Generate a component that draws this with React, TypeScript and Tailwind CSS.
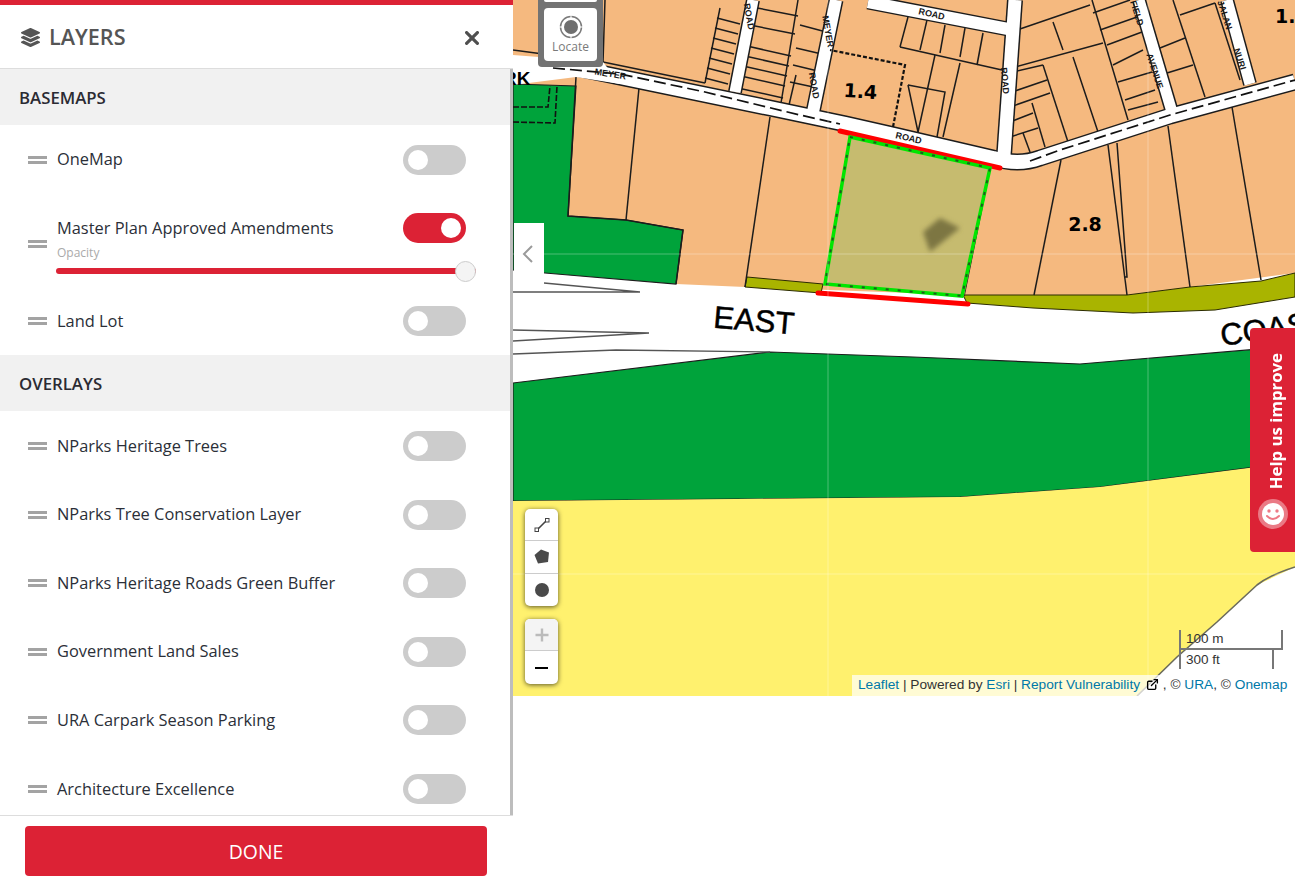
import React from 'react';
import { FaLayerGroup } from 'react-icons/fa';
import { ExternalLink } from 'lucide-react';

const Toggle = ({ on = false }: { on?: boolean }) => (
  <div className={`h-[30px] w-[63px] rounded-full flex items-center px-[5px] shrink-0 ${on ? 'bg-[#dc2235] justify-end' : 'bg-[#cccccc] justify-start'}`}>
    <div className="w-5 h-5 rounded-full bg-white" />
  </div>
);

const Grip = () => (
  <div className="w-[19px] flex flex-col gap-[2px] shrink-0">
    <div className="h-[3px] bg-[#a3a3a3]" />
    <div className="h-[3px] bg-[#a3a3a3]" />
  </div>
);

const Row = ({ label }: { label: string }) => (
  <div className="h-[68.6px] pl-[28px] pr-[44px] pt-[1px] flex items-center">
    <Grip />
    <span className="ml-[10px] flex-1 text-[16.4px] text-[#2b2f38]">{label}</span>
    <Toggle />
  </div>
);

const SectionTitle = ({ children }: { children: string }) => (
  <div className="h-[56px] bg-[#f1f1f1] pl-[19px] pt-[1px] flex items-center text-[16.8px] font-semibold text-[#2b2b33]">{children}</div>
);

const overlays = [
  'NParks Heritage Trees',
  'NParks Tree Conservation Layer',
  'NParks Heritage Roads Green Buffer',
  'Government Land Sales',
  'URA Carpark Season Parking',
  'Architecture Excellence',
];

// parcel boundaries, in page coordinates
const parcelLines = [
  'M720 8 L705 83', 'M717 18 L740 24', 'M715 28 L738 34', 'M713 38 L736 44', 'M711 48 L734 54', 'M709 58 L732 64', 'M707 68 L730 74', 'M705 78 L728 84',
  'M798 0 L781 103', 'M752 7 L798 16', 'M750 25 L795 34', 'M747 46 L791 56', 'M745 56 L789 66', 'M743 66 L787 76', 'M741 76 L785 86', 'M738 88 L783 98',
  'M800 25 L830 33', 'M796 48 L826 55', 'M793 65 L822 72', 'M790 82 L818 88', 'M796 75 L789 105',
  'M513 50 L603 62', 'M605 0 L603 62', 'M603 62 L705 83',
  'M908 17 L900 47', 'M927 20 L920 50', 'M945 25 L940 53', 'M965 28 L960 57', 'M983 33 L977 65', 'M900 47 L1002 70',
  'M935 55 L918 132', 'M960 63 L943 137', 'M908 85 L945 92 L937 137', 'M908 85 L918 132',
  'M1017 30 L1090 5', 'M1015 67 L1103 43', 'M1053 22 L1063 50', 'M1013 72 L1043 65', 'M1012 92 L1047 80', 'M1010 107 L1050 93', 'M1010 122 L1033 113', 'M1010 137 L1038 128',
  'M1023 133 L1030 152', 'M1032 103 L1045 147', 'M1043 65 L1068 142', 'M1073 57 L1098 132', 'M1092 0 L1128 120', 'M1093 13 L1130 0', 'M1100 30 L1137 17', 'M1107 45 L1142 32',
  'M1113 65 L1143 50', 'M1118 82 L1152 72', 'M1125 100 L1155 90', 'M1128 110 L1158 102',
  'M1160 48 L1185 38', 'M1167 73 L1193 65', 'M1173 0 L1205 97', 'M1180 15 L1215 3', 'M1215 3 L1240 80',
  'M639 88 L626 220', 'M770 117 L745 287', 'M1061 160 L1034 295', 'M1108 145 L1127 295', 'M1117 143 L1127 277 L1125 277',
  'M1168 126 L1190 287', 'M1232 107 L1261 280', 'M990 168 L964 296',
];

// road centre lines with their white width
const roads = [
  { d: 'M576 68 L770 108 L846 124 L890 134 L993 158 Q1018 166 1040 158 L1170 116 L1295 82', w: 14 },
  { d: 'M753 0 L735 92', w: 11 },
  { d: 'M836 0 L813 112', w: 12 },
  { d: 'M1015 0 L1004 155', w: 13 },
  { d: 'M1139 0 L1172 112', w: 11 },
  { d: 'M1227 0 L1250 84', w: 11 },
  { d: 'M868 2 L1008 29', w: 12 },
];

const roadText = "font-['Liberation_Sans'] font-bold fill-[#1a1a1a]";

const MapDrawing = () => (
  <svg viewBox="513 0 782 696" className="w-full h-[696px] block">
    <defs>
      <filter id="smudge"><feGaussianBlur stdDeviation="2.6" /></filter>
    </defs>
    <rect x="513" y="0" width="782" height="696" fill="#ffffff" />
    {/* land */}
    <path d="M513 0 H1295 V273 L1190 287 L1127 295 L963 295 L745 287 L676 284 L576 270 L513 260 Z" fill="#f5b97f" />
    <path d="M513 84 L576 86 L568 216 L626 220 L683 230 L676 284 L545 273 L513 270 Z" fill="#00a33b" stroke="#1c1c1c" strokeWidth="1.2" />
    <path d="M576 77 L568 216 L626 220 L683 230 L676 284" fill="none" stroke="#1c1c1c" strokeWidth="1.5" />
    <path d="M747 277 L823 284 L821 293 L745 287 Z" fill="#a9b400" stroke="#2a2a00" strokeWidth="1" />
    <path d="M963 295 L1127 295 L1190 287 L1261 281 L1295 273 L1295 297 L1215 310 L1133 313 L1033 308 L967 303 Z" fill="#a9b400" stroke="#2a2a00" strokeWidth="1" />
    <path d="M513 383 L770 352 L913 357 L1080 364 L1295 346 V462 L1100 487 L960 497 L513 501 Z" fill="#00a33b" stroke="#1c1c1c" strokeWidth="1.2" />
    <path d="M513 501 L960 497 L1100 487 L1295 462 V567 L1257 585 L1217 622 L1177 657 L1137 696 H513 Z" fill="#fff16e" />
    <path d="M1295 567 Q1270 575 1257 585 L1217 622 L1177 657 L1137 696" fill="none" stroke="#6b6b5c" strokeWidth="1.6" />
    {/* parcels sit under the roads so that the roads cut them off */}
    <g fill="none" stroke="#1c1c1c" strokeWidth="1.5">
      {parcelLines.map((d) => (
        <path key={d} d={d} />
      ))}
    </g>
    {/* roads: dark casing first, white on top, so junctions stay open */}
    <g fill="none" stroke="#1c1c1c" strokeLinejoin="round">
      {roads.map((r) => (
        <path key={`c${r.d}`} d={r.d} strokeWidth={r.w + 3} />
      ))}
    </g>
    <path d="M513 55 L603 62 L620 84 L576 77 L513 85 Z" fill="#ffffff" />
    <g fill="none" stroke="#ffffff" strokeLinejoin="round">
      {roads.map((r) => (
        <path key={`w${r.d}`} d={r.d} strokeWidth={r.w} />
      ))}
    </g>
    <path d="M553 68 L620 74 L705 92 L800 115 L840 124 M1030 161 L1060 150 L1170 115 L1295 80" fill="none" stroke="#111111" strokeWidth="1.7" strokeDasharray="12 5" />
    <path d="M513 107 L548 107 L550 86 M513 122 L555 123 L557 86" fill="none" stroke="#111111" strokeWidth="1.6" strokeDasharray="6 2" />
    <path d="M893 127 L905 65 L830 50" fill="none" stroke="#111111" strokeWidth="2.2" strokeDasharray="4 2" />
    {/* carriageway lines */}
    <path d="M544 283 L640 292 L513 292 M513 330 L649 333 L513 341 M513 354 L616 350 L770 352" fill="none" stroke="#555555" strokeWidth="1.3" />
    {/* site */}
    <path d="M850 137 L990 168 L964 296 L825 284 Z" fill="#c6bb6f" />
    <path d="M923 232 L940 218 L960 228 L945 240 L930 252 Z" fill="#7d7643" filter="url(#smudge)" />
    <path d="M840 131 L1000 168 M818 293 L968 304" fill="none" stroke="#ff0000" strokeWidth="5" strokeLinecap="round" />
    <path d="M850 137 L990 168 L962 296 L825 284 Z" fill="none" stroke="#00e600" strokeWidth="3.5" />
    <path d="M850 137 L990 168 L962 296 L825 284 Z" fill="none" stroke="#1f5a1f" strokeWidth="2" strokeDasharray="3 9" />
    {/* tile seams */}
    <path d="M513 254 H1295 M513 574 H1295 M828 0 V696 M1148 0 V696" fill="none" stroke="#ffffff" strokeOpacity="0.3" strokeWidth="1" />
    {/* labels */}
    <text x="754" y="331" transform="rotate(5 754 320)" textAnchor="middle" stroke="#000000" strokeWidth="0.5" className="font-['Liberation_Sans'] text-[31px] fill-black">EAST</text>
    <text x="1222" y="346" transform="rotate(-8 1222 346)" stroke="#000000" strokeWidth="0.5" className="font-['Liberation_Sans'] text-[31px] fill-black">COAS</text>
    <text x="860" y="98" transform="rotate(4 860 98)" textAnchor="middle" className="font-['DejaVu_Sans'] font-bold text-[19px] fill-black">1.4</text>
    <text x="1085" y="231" textAnchor="middle" className="font-['DejaVu_Sans'] font-bold text-[19px] fill-black">2.8</text>
    <text x="1275" y="23" className="font-['DejaVu_Sans'] font-bold text-[19px] fill-black">1.</text>
    <text x="503" y="85" className="font-['Liberation_Sans'] font-bold text-[19px] fill-black">RK</text>
    <text x="610" y="77" transform="rotate(9 610 77)" textAnchor="middle" className={`${roadText} text-[9px]`}>MEYER</text>
    <text x="908" y="141" transform="rotate(13 908 141)" textAnchor="middle" className={`${roadText} text-[9px]`}>ROAD</text>
    <text x="931" y="17" transform="rotate(13 931 17)" textAnchor="middle" className={`${roadText} text-[9px]`}>ROAD</text>
    <text x="746" y="17" transform="rotate(80 746 17)" textAnchor="middle" className={`${roadText} text-[9px]`}>ROAD</text>
    <text x="825" y="32" transform="rotate(80 825 32)" textAnchor="middle" className={`${roadText} text-[9px]`}>MEYER</text>
    <text x="811" y="86" transform="rotate(80 811 86)" textAnchor="middle" className={`${roadText} text-[9px]`}>ROAD</text>
    <text x="1002" y="81" transform="rotate(85 1002 81)" textAnchor="middle" className={`${roadText} text-[9px]`}>ROAD</text>
    <text x="1134" y="14" transform="rotate(72 1134 14)" textAnchor="middle" className={`${roadText} text-[9px]`}>FIELD</text>
    <text x="1152" y="72" transform="rotate(72 1152 72)" textAnchor="middle" className={`${roadText} text-[9px]`}>AVENUE</text>
    <text x="1222" y="16" transform="rotate(72 1222 16)" textAnchor="middle" className={`${roadText} text-[9px]`}>JALAN</text>
    <text x="1237" y="60" transform="rotate(72 1237 60)" textAnchor="middle" className={`${roadText} text-[9px]`}>NURI</text>
  </svg>
);

const Smiley = () => (
  <svg width="30" height="30" viewBox="0 0 30 30">
    <circle cx="15" cy="15" r="15" fill="#ffffff" fillOpacity="0.4" />
    <circle cx="15" cy="15" r="11" fill="#ffffff" />
    <circle cx="11" cy="12" r="1.7" fill="#ee7a86" />
    <circle cx="19" cy="12" r="1.7" fill="#ee7a86" />
    <path d="M9 17 Q15 23 21 17" fill="none" stroke="#ee7a86" strokeWidth="2" strokeLinecap="round" />
  </svg>
);

const MapControls = () => (
  <>
    {/* collapse handle */}
    <div className="absolute left-[1px] top-[223px] w-[30px] h-[62px] bg-white flex items-center justify-center pr-[2px]">
      <svg width="12" height="18" viewBox="0 0 12 18" fill="none" stroke="#9a9a9a" strokeWidth="2">
        <path d="M10 1 L2 9 L10 17" />
      </svg>
    </div>

    {/* locate */}
    <div className="absolute left-[25px] top-0 w-[65px] h-[67px] bg-[#737373] rounded-b-[4px] px-[6px] flex flex-col">
      <div className="h-[2px] bg-white rounded-b-[3px]" />
      <div className="mt-[6px] h-[53px] bg-white rounded-[4px] flex flex-col items-center pt-[7px]">
        <svg width="24" height="24" viewBox="0 0 24 24">
          <circle cx="12" cy="12" r="10.5" fill="none" stroke="#7a7a7a" strokeWidth="1.5" />
          <circle cx="12" cy="12" r="7" fill="#6f6f6f" />
          <path d="M12 0 V3 M12 21 V24 M0 12 H3 M21 12 H24" stroke="#ffffff" strokeWidth="1" />
        </svg>
        <span className="text-[12px] leading-[14px] mt-[1px] text-[#7a7a7a]">Locate</span>
      </div>
    </div>

    {/* draw tools */}
    <div className="absolute left-[12px] top-[509px] w-[33px] bg-white rounded-[5px] shadow-[0_1px_5px_rgba(0,0,0,0.65)] flex flex-col">
      <div className="h-[32px] flex items-center justify-center border-b border-[#cccccc]">
        <svg width="16" height="16" viewBox="0 0 16 16" fill="none" stroke="#444444" strokeWidth="1">
          <path d="M3 13 L13 3" strokeWidth="1.6" />
          <rect x="1" y="11" width="3.5" height="3.5" fill="#ffffff" />
          <rect x="11.5" y="1.5" width="3.5" height="3.5" fill="#ffffff" />
        </svg>
      </div>
      <div className="h-[33px] flex items-center justify-center border-b border-[#cccccc]">
        <svg width="16" height="16" viewBox="0 0 16 16"><path d="M7 0.5 L15 3.5 L14 13 L4 14.5 L0.5 6 Z" fill="#4a4a4a" /></svg>
      </div>
      <div className="h-[32px] flex items-center justify-center">
        <div className="w-[14px] h-[14px] rounded-full bg-[#4a4a4a]" />
      </div>
    </div>

    {/* zoom */}
    <div className="absolute left-[12px] top-[619px] w-[33px] bg-white rounded-[5px] shadow-[0_1px_5px_rgba(0,0,0,0.65)] flex flex-col overflow-hidden">
      <div className="h-[32px] bg-[#f4f4f4] border-b border-[#cccccc] flex items-center justify-center">
        <svg width="14" height="14" viewBox="0 0 14 14"><path d="M7 0.5 V13.5 M0.5 7 H13.5" stroke="#bbbbbb" strokeWidth="2.4" /></svg>
      </div>
      <div className="h-[33px] flex items-center justify-center">
        <div className="w-[13px] h-[2px] bg-black" />
      </div>
    </div>

    {/* scale */}
    <div className="absolute left-[666px] top-[630px] font-['Liberation_Sans'] text-[13.5px] leading-[16px] text-[#333333]">
      <div className="w-[104px] h-[20px] border-l-2 border-r-2 border-b-2 border-[#777777] pl-[5px] pt-[1px]">100 m</div>
      <div className="w-[95px] h-[19px] border-l-2 border-r-2 border-[#777777] pl-[5px] pt-[2px]">300 ft</div>
    </div>

    {/* attribution */}
    <div className="absolute right-0 top-[675px] w-[443px] h-[21px] bg-white/70 pl-[6px] flex items-center font-['Liberation_Sans'] text-[13.7px] text-[#333333] whitespace-pre">
      <span className="text-[#0078a8]">Leaflet</span>
      <span> | Powered by </span>
      <span className="text-[#0078a8]">Esri</span>
      <span> | </span>
      <span className="text-[#0078a8]">Report Vulnerability</span>
      <ExternalLink size={13} strokeWidth={2.5} className="ml-[6px] mb-[3px] text-black" />
      <span> , © </span>
      <span className="text-[#0078a8]">URA</span>
      <span>, © </span>
      <span className="text-[#0078a8]">Onemap</span>
    </div>

    {/* feedback tab */}
    <div className="absolute right-0 top-[328px] w-[45px] h-[224px] bg-[#dc2235] rounded-l-[4px] flex flex-col items-center justify-end pb-[23px] pl-[1px]">
      <span className="[writing-mode:vertical-rl] rotate-180 text-[16.8px] font-bold text-white mb-[10px] ml-[5px]">Help us improve</span>
      <Smiley />
    </div>
  </>
);

export default function App() {
  return (
    <div className="w-full h-[884px] flex bg-white overflow-hidden font-['Open_Sans','Noto_Sans',sans-serif]">
      <aside className="w-[513px] h-[884px] shrink-0 flex flex-col bg-white">
        <div className="h-[5px] bg-[#dc2235]" />
        <header className="h-[64px] pl-[21px] pr-[34px] pt-[2px] flex items-center border-b border-[#dddddd]">
          <FaLayerGroup size={19} className="text-[#555555]" />
          <h1 className="ml-[9px] flex-1 text-[21.6px] font-semibold text-[#555555]">LAYERS</h1>
          <svg width="14" height="14" viewBox="0 0 14 14" fill="none" stroke="#4f4f4f" strokeWidth="3.2" strokeLinecap="round">
            <path d="M1.6 1.6 L12.4 12.4 M12.4 1.6 L1.6 12.4" />
          </svg>
        </header>

        <div className="flex-1 min-h-0 overflow-hidden border-r-[3px] border-[#bdbdbd]">
          <SectionTitle>BASEMAPS</SectionTitle>
          <Row label="OneMap" />

          <div className="h-[93px] pl-[28px] pr-[44px] pt-[8px] flex items-center">
            <Grip />
            <div className="ml-[10px] flex-1 pb-[1px]">
              <div className="flex items-center justify-between h-[30px]">
                <span className="text-[16.4px] text-[#2b2f38]">Master Plan Approved Amendments</span>
                <Toggle on />
              </div>
              <div className="text-[12px] leading-[16px] mt-[2px] text-[#aaaaaa]">Opacity</div>
              <div className="relative h-[6px] mt-[7px] mr-[-10px] ml-[-1px] bg-[#dc2235] rounded-full">
                <div className="absolute right-0 top-[-7px] w-[21px] h-[21px] rounded-full bg-[#f4f4f4] border border-[#cccccc]" />
              </div>
            </div>
          </div>

          <Row label="Land Lot" />
          <SectionTitle>OVERLAYS</SectionTitle>
          {overlays.map((name) => (
            <Row key={name} label={name} />
          ))}
        </div>

        <footer className="h-[69px] border-t border-[#dddddd] pl-[25px] pr-[26px] pt-[10px]">
          <button className="w-full h-[50px] pt-[1px] bg-[#dc2235] rounded-[4px] text-white text-[19.4px]">DONE</button>
        </footer>
      </aside>

      <main className="relative flex-1 min-w-0">
        <MapDrawing />
        <MapControls />
      </main>
    </div>
  );
}
